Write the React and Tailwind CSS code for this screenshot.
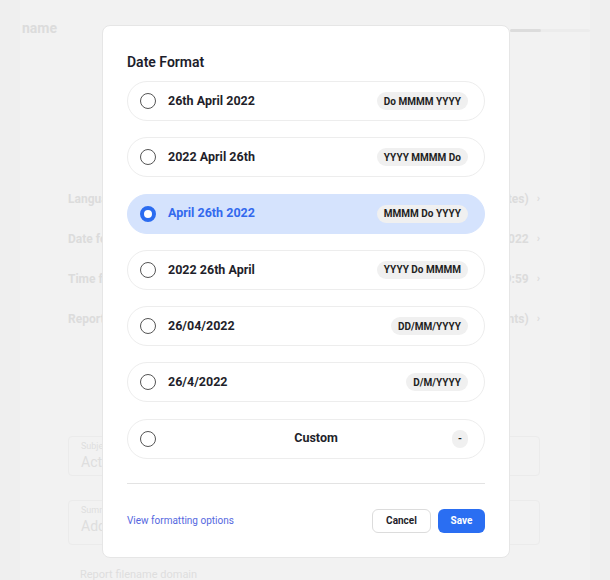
import { useState } from 'react';

const formats = [
  { label: '26th April 2022', token: 'Do MMMM YYYY' },
  { label: '2022 April 26th', token: 'YYYY MMMM Do' },
  { label: 'April 26th 2022', token: 'MMMM Do YYYY' },
  { label: '2022 26th April', token: 'YYYY Do MMMM' },
  { label: '26/04/2022', token: 'DD/MM/YYYY' },
  { label: '26/4/2022', token: 'D/M/YYYY' },
  { label: 'Custom', token: '-', custom: true },
];

const settings = [
  { name: 'Language', value: 'English (United States)' },
  { name: 'Date format', value: '26th April 2022' },
  { name: 'Time format', value: '23:59:59' },
  { name: 'Report format', value: 'Report (all events)' },
];

const Radio = ({ checked }) =>
  checked ? (
    <span className="w-4 h-4 rounded-full border-[4px] border-[#2b6cf0] bg-white shrink-0" />
  ) : (
    <span className="w-4 h-4 rounded-full border-[1.5px] border-[#555] bg-white shrink-0" />
  );

const Background = () => (
  <div className="min-h-[580px] bg-[#efefef] px-5">
    <div className="bg-[#f2f2f2] min-h-[580px]">
      <div className="flex items-center justify-between pt-[18px]">
        <span className="text-[14px] font-bold text-[#dcdcdc] pl-[2px]">name</span>
        <div className="w-20 h-[3px] bg-[#ececec] rounded-full flex mt-1">
          <div className="w-[31px] h-[3px] bg-[#dcdcdc] rounded-full" />
        </div>
      </div>
      <div className="mt-[151px] pl-12 pr-[50px] flex flex-col gap-[22px]">
        {settings.map((s) => (
          <div key={s.name} className="flex items-center justify-between text-[12px] font-bold text-[#dcdcdc] leading-[18px]">
            <span>{s.name}</span>
            <span className="flex items-center gap-2">
              {s.value}
              <span className="text-[11px]">›</span>
            </span>
          </div>
        ))}
      </div>
      <div className="mt-[108px] pl-12 pr-[50px] flex flex-col gap-6">
        <div className="h-10 border border-[#ebebeb] rounded px-3 pt-[3px]">
          <div className="text-[9px] text-[#dedede]">Subject</div>
          <div className="text-[14px] text-[#dedede] leading-4">Activity report</div>
        </div>
        <div className="h-[45px] border border-[#ebebeb] rounded px-3 pt-[3px]">
          <div className="text-[9px] text-[#dedede]">Summary</div>
          <div className="text-[14px] text-[#dedede] leading-4">Add a summary</div>
        </div>
        <div className="text-[11px] text-[#dedede] pl-3 -mt-[2px]">Report filename domain</div>
      </div>
    </div>
  </div>
);

export default function App() {
  const [selected, setSelected] = useState(2);

  return (
    <div className="relative w-full min-h-[580px] overflow-hidden" style={{ fontFamily: 'Roboto, "Noto Sans", sans-serif' }}>
      <Background />

      <div className="absolute left-[102px] top-[25px] w-[408px] bg-white rounded-lg border border-[#e6e6e6] px-6 pt-[26px] pb-6">
        <h2 className="text-[14px] font-semibold text-[#1d1d2b] leading-5 mb-[9px]">Date Format</h2>

        <div className="flex flex-col gap-[16.3px]">
          {formats.map((f, i) => {
            const active = i === selected;
            return (
              <button
                key={f.label}
                onClick={() => setSelected(i)}
                className={`h-10 rounded-full flex items-center pl-3 pr-4 text-left ${
                  active ? 'bg-[#d5e3fd] border border-[#d5e3fd]' : 'bg-white border border-[#ededed]'
                }`}
              >
                <Radio checked={active} />
                <span
                  className={`flex-1 ml-3 text-[12.5px] font-bold ${f.custom ? 'text-center pl-3' : ''} ${
                    active ? 'text-[#3369ee]' : 'text-[#1f1f2b]'
                  }`}
                >
                  {f.label}
                </span>
                <span
                  className={`h-[18px] rounded-full bg-[#f0f0f0] text-[10px] font-bold text-[#222] flex items-center ${
                    f.custom ? 'px-[6px]' : 'px-[7px]'
                  }`}
                >
                  {f.token}
                </span>
              </button>
            );
          })}
        </div>

        <div className="h-px bg-[#e3e3e3] mt-6" />

        <div className="flex items-center justify-between mt-[25px]">
          <a href="#" className="text-[10px] text-[#5568e0]">View formatting options</a>
          <div className="flex items-center gap-[7px]">
            <button className="h-6 w-[59px] rounded-md border border-[#dcdcdc] bg-white text-[10px] font-bold text-[#1f1f2b]">
              Cancel
            </button>
            <button className="h-6 w-[47px] rounded-md bg-[#2a6ef2] text-[10px] font-bold text-white">
              Save
            </button>
          </div>
        </div>
      </div>
    </div>
  );
}
